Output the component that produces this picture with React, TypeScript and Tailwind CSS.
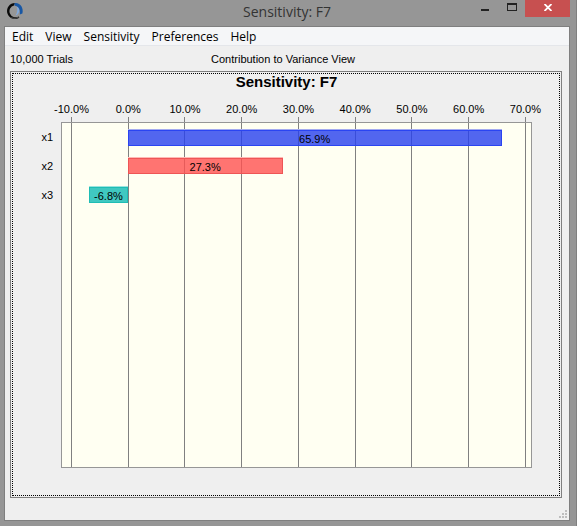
const menuItems = ['Edit', 'View', 'Sensitivity', 'Preferences', 'Help'];

const ticks = [-10, 0, 10, 20, 30, 40, 50, 60, 70];

const bars = [
  { name: 'x1', value: 65.9, edge: 'border-[#a4abf0]', fill: 'border-[#2a44f2] bg-[#2740ed]/80' },
  { name: 'x2', value: 27.3, edge: 'border-[#ffb9b4]', fill: 'border-[#ee5555] bg-[#ff5150]/80' },
  { name: 'x3', value: -6.8, edge: 'border-[#9ce4de]', fill: 'border-[#1fbdb5] bg-[#10bab4]/80' },
];

const AXIS_START = -11.586;
const AXIS_SPAN = 82.66;

const position = (value: number) => `${((value - AXIS_START) / AXIS_SPAN) * 100}%`;
const extent = (value: number) => `${(Math.abs(value) / AXIS_SPAN) * 100}%`;

function Logo() {
  return (
    <svg width="18" height="18" viewBox="0 0 18 18" fill="none" aria-hidden="true">
      <path d="M9 1A8 8 0 1 0 13.4 15.7L12.5 14.4A6 6 0 1 1 8 3.4Z" fill="#0a0a0a" />
      <path d="M8.5 1.2C14 .2 18 6 16.4 11.6L13.8 12.4C14.4 7.4 12.5 4.4 8.5 3.6Z" fill="#1857a4" />
      <path d="M10.5 4.6C14.4 6.5 14.2 11.7 9.6 13.6C11.6 10.5 11.7 8 10.5 4.6Z" fill="#82a9dc" />
      <path d="M5 15.7Q9 17.6 13 15" stroke="#4a4a4a" strokeWidth="1" />
    </svg>
  );
}

function TitleBar() {
  return (
    <header className="grid h-[26px] grid-cols-[1fr_auto_1fr] items-start">
      <div className="pt-[2px] pl-[2px]">
        <Logo />
      </div>
      <h1 className="font-['Open_Sans','Noto_Sans',sans-serif] text-[14px] leading-6 text-[#333333]">Sensitivity: F7</h1>
      <div className="flex justify-end">
        <button type="button" aria-label="Minimize" className="flex h-[17px] w-[27px] items-center justify-center">
          <svg width="8" height="8" viewBox="0 0 8 8" shapeRendering="crispEdges">
            <rect y="4" width="8" height="2" fill="#222222" />
          </svg>
        </button>
        <button type="button" aria-label="Maximize" className="flex h-[17px] w-[27px] items-start justify-center pt-[3px]">
          <svg width="10" height="8" viewBox="0 0 10 8" shapeRendering="crispEdges">
            <path d="M0 0H10V8H0ZM1 2V7H9V2Z" fill="#222222" fillRule="evenodd" />
          </svg>
        </button>
        <button type="button" aria-label="Close" className="flex h-[17px] w-[45px] items-start justify-center bg-[#c75050] pt-[4px]">
          <svg width="8" height="7" viewBox="0 0 8 7" stroke="#ffffff" strokeWidth="1.8">
            <path d="M.5 0L7.5 7M7.5 0L.5 7" />
          </svg>
        </button>
      </div>
    </header>
  );
}

function Chart() {
  return (
    <section aria-label="Sensitivity chart" className="flex flex-1 flex-col border border-[#7f7f7f] p-px">
      <div className="flex flex-1 flex-col border border-dotted border-black pr-[27px] pb-[27px]">
        <h2 className="h-7 pl-[28px] text-center text-[15px] leading-4 font-bold text-black">Sensitivity: F7</h2>
        <div className="grid flex-1 grid-cols-[48px_1fr] grid-rows-[20px_1fr]">
          <div className="relative col-start-2 mx-px text-[11px] leading-[14px]">
            {ticks.map((tick) => (
              <div key={tick} className="absolute top-0 flex w-px justify-center" style={{ left: position(tick) }}>
                <span className="whitespace-nowrap">{tick.toFixed(1)}%</span>
              </div>
            ))}
            {ticks.map((tick) => (
              <div key={tick} className="absolute bottom-0 h-[5px] w-px bg-[#808080]" style={{ left: position(tick) }} />
            ))}
          </div>
          <div className="col-start-1 grid grid-rows-12 items-center py-px pr-2 text-right text-[11px] leading-4">
            {bars.map((bar) => (
              <span key={bar.name}>{bar.name}</span>
            ))}
          </div>
          <div className="relative border border-[#969696] bg-[#fffff2]">
            {ticks.map((tick) => (
              <div key={tick} className="absolute inset-y-0 w-px bg-[#808080]" style={{ left: position(tick) }} />
            ))}
            <div className="relative grid h-full grid-rows-12 items-center">
              {bars.map((bar) => (
                <div
                  key={bar.name}
                  className={`h-[17px] border-t ${bar.edge}`}
                  style={{ marginLeft: position(Math.min(0, bar.value)), width: extent(bar.value) }}
                >
                  <div className={`flex h-full items-center justify-center border pt-[2px] text-[11px] leading-4 ${bar.fill}`}>
                    {bar.value.toFixed(1)}%
                  </div>
                </div>
              ))}
            </div>
          </div>
        </div>
      </div>
    </section>
  );
}

export default function App() {
  return (
    <div className="flex min-h-screen flex-col border-r border-[#808080] bg-[#969696] pr-[6px] pb-[5px] pl-1 font-['Liberation_Sans',Arial,sans-serif] text-black">
      <TitleBar />
      <main className="flex flex-1 flex-col border border-[#7f7f7f] bg-[#efefef]">
        <nav className="flex h-[19px] gap-3 border-b border-[#e4e6ea] bg-[#f5f6f8] pl-[7px] font-['Open_Sans','Noto_Sans',sans-serif] text-[12px] leading-5">
          {menuItems.map((item) => (
            <button key={item} type="button" className="whitespace-nowrap">
              {item}
            </button>
          ))}
        </nav>
        <div className="grid h-[25px] grid-cols-[1fr_auto_1fr] items-center pr-[13px] pl-[5px] text-[11px] leading-4">
          <span>10,000 Trials</span>
          <span>Contribution to Variance View</span>
        </div>
        <div className="flex flex-1 flex-col pr-[7px] pl-[5px]">
          <Chart />
        </div>
        <footer className="flex h-[22px] items-end justify-end pr-px pb-px">
          <svg width="9" height="9" viewBox="0 0 9 9" fill="#bdbdbd" shapeRendering="crispEdges" aria-hidden="true">
            <path d="M6 0h2v2H6zM3 3h2v2H3zM6 3h2v2H6zM0 6h2v2H0zM3 6h2v2H3zM6 6h2v2H6z" />
          </svg>
        </footer>
      </main>
    </div>
  );
}
